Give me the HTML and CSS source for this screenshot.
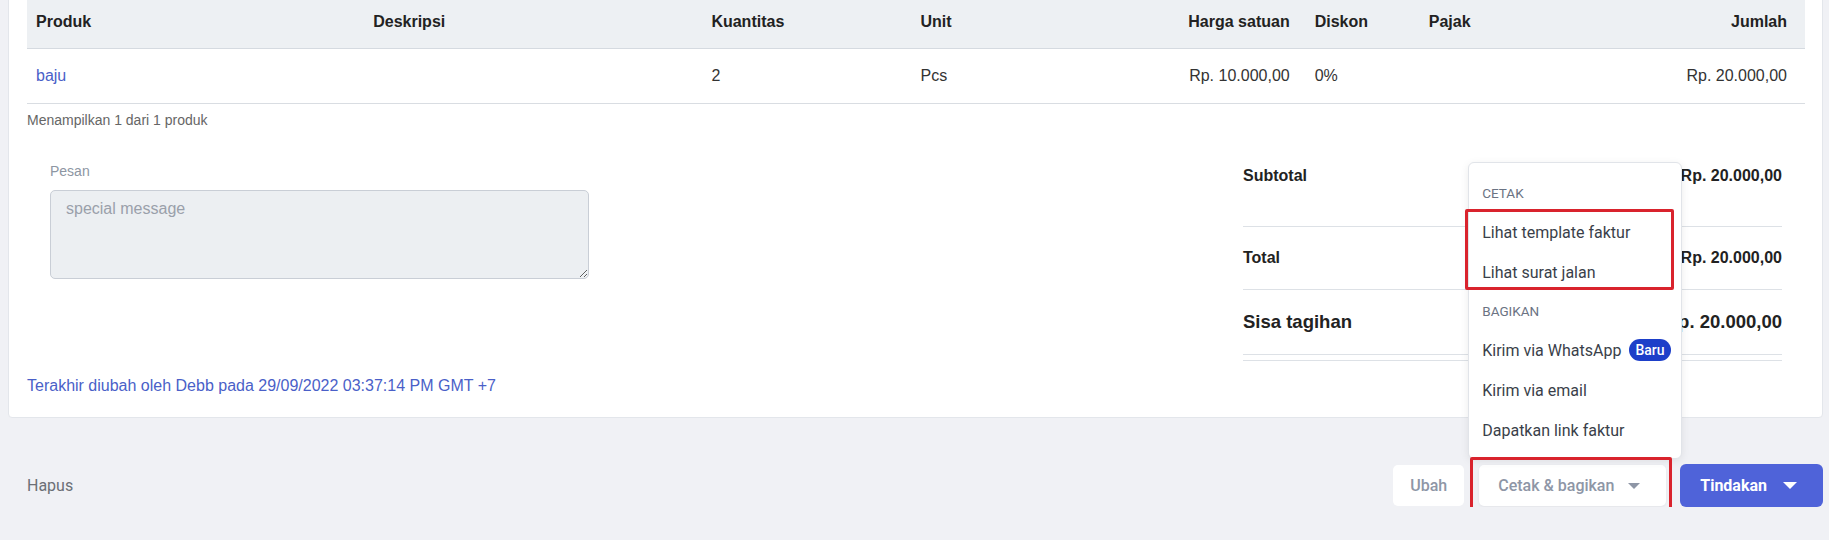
FILE: index.html
```html
<!DOCTYPE html>
<html>

	<head>
		<meta charset="UTF-8">
		<title>Faktur</title>
		<link rel="stylesheet" href="styles.css">
	</head>

	<body>
		<div class="page">
			<div class="card">
				<table class="items">
					<colgroup>
						<col class="c-produk">
						<col class="c-desk">
						<col class="c-qty">
						<col class="c-unit">
						<col class="c-harga">
						<col class="c-diskon">
						<col class="c-pajak">
						<col class="c-jumlah">
					</colgroup>
					<tr>
						<th>Produk</th>
						<th>Deskripsi</th>
						<th>Kuantitas</th>
						<th>Unit</th>
						<th class="right">Harga satuan</th>
						<th>Diskon</th>
						<th>Pajak</th>
						<th class="right">Jumlah</th>
					</tr>
					<tr>
						<td><a class="link">baju</a></td>
						<td></td>
						<td>2</td>
						<td>Pcs</td>
						<td class="right">Rp. 10.000,00</td>
						<td>0%</td>
						<td></td>
						<td class="right">Rp. 20.000,00</td>
					</tr>
				</table>
				<p class="count">Menampilkan 1 dari 1 produk</p>

				<div class="bottom">
					<div class="note">
						<label>Pesan</label>
						<textarea placeholder="special message"></textarea>
					</div>
					<div class="summary">
						<div class="sum-row first">
							<span>Subtotal</span>
							<span>Rp. 20.000,00</span>
						</div>
						<div class="sum-row">
							<span>Total</span>
							<span>Rp. 20.000,00</span>
						</div>
						<div class="sum-row big">
							<span>Sisa tagihan</span>
							<span>Rp. 20.000,00</span>
						</div>
						<div class="sum-end"></div>
					</div>
				</div>

				<p class="edited">Terakhir diubah oleh Debb pada 29/09/2022 03:37:14 PM GMT +7</p>
			</div>

			<div class="actions">
				<span class="delete">Hapus</span>
				<div class="btns">
					<button class="btn btn-light btn-edit">Ubah</button>
					<div class="share">
						<div class="menu">
							<div class="menu-head">Cetak</div>
							<div class="menu-item">Lihat template faktur</div>
							<div class="menu-item">Lihat surat jalan</div>
							<div class="menu-head">Bagikan</div>
							<div class="menu-item">Kirim via WhatsApp <span class="badge">Baru</span></div>
							<div class="menu-item">Kirim via email</div>
							<div class="menu-item">Dapatkan link faktur</div>
							<div class="mark mark-menu"></div>
						</div>
						<button class="btn btn-light btn-share">Cetak &amp; bagikan <i class="caret"></i></button>
						<div class="mark mark-btn"></div>
					</div>
					<button class="btn btn-primary">Tindakan <i class="caret caret-white"></i></button>
				</div>
			</div>
		</div>
	</body>

</html>
```

FILE: styles.css
```css
body {
	margin: 0;
	background-color: #f0f1f5;
	font-family: "Liberation Sans", Arial, sans-serif;
	color: #333;
	overflow: hidden;
}

.page {
	margin-top: -19px;
	padding: 0 6px 0 8px;
}

.card {
	background-color: white;
	border: 1px solid #e3e6eb;
	border-radius: 4px;
	padding: 18px 17px 22px 18px;
}

/* tabel produk */
.items {
	width: 100%;
	table-layout: fixed;
	border-collapse: separate;
	border-spacing: 0;
	font-size: 16px;
}

.c-produk { width: 337px; }
.c-desk { width: 338px; }
.c-qty { width: 209px; }
.c-unit { width: 200px; }
.c-harga { width: 194px; }
.c-diskon { width: 114px; }
.c-pajak { width: 202px; }
.c-jumlah { width: 183px; }

.items th {
	height: 44px;
	padding: 0 9px 4px;
	background-color: #edf0f3;
	border-bottom: 1px solid #d5dae0;
	text-align: left;
	color: #222;
	font-weight: bold;
}

.items td {
	height: 54px;
	padding: 0 9px;
	border-bottom: 1px solid #d9dde2;
	color: #333;
}

.items .right {
	text-align: right;
}

.items th:nth-child(5),
.items td:nth-child(5) {
	padding-right: 16px;
}

.items th:last-child,
.items td:last-child {
	padding-right: 18px;
}

.link {
	color: #4a5fc8;
	cursor: pointer;
}

.count {
	margin: 7px 0 0;
	font-size: 14px;
	line-height: 18px;
	color: #666;
}

/* pesan dan ringkasan */
.bottom {
	display: flex;
	justify-content: space-between;
	margin-top: 33px;
	padding: 0 23px;
}

.note {
	width: 539px;
}

.note label {
	display: block;
	font-size: 14px;
	line-height: 18px;
	color: #8d96a3;
}

.note textarea {
	display: block;
	box-sizing: border-box;
	width: 100%;
	height: 89px;
	margin-top: 10px;
	padding: 9px 15px;
	background-color: #eceff2;
	border: 1px solid #c9ced6;
	border-radius: 5px;
	font-family: "Liberation Sans", Arial, sans-serif;
	font-size: 16px;
	color: #333;
}

.note textarea::placeholder {
	color: #9aa0aa;
}

.summary {
	width: 539px;
}

.sum-row {
	box-sizing: border-box;
	display: flex;
	justify-content: space-between;
	align-items: center;
	height: 63px;
	border-bottom: 1px solid #dde1e6;
	font-size: 16px;
	line-height: 18px;
	font-weight: bold;
	color: #222;
}

.sum-row.first {
	align-items: flex-start;
	height: 65px;
	padding-top: 5px;
}

.sum-row.big {
	height: 65px;
	font-size: 18.5px;
}

.sum-end {
	margin-top: 5px;
	border-top: 1px solid #dde1e6;
}

.edited {
	margin: 16px 0 0;
	font-size: 16px;
	line-height: 18px;
	color: #4a5fc8;
}

/* tombol bawah */
.actions {
	display: flex;
	justify-content: space-between;
	align-items: center;
	margin-top: 46px;
	padding-left: 19px;
}

.delete {
	font-family: Roboto, sans-serif;
	font-size: 16px;
	color: #6b6f76;
}

.btns {
	display: flex;
	align-items: center;
	gap: 15px;
}

.share {
	position: relative;
	margin-right: -1px;
}

.btn {
	display: flex;
	align-items: center;
	border: none;
	border-radius: 5px;
	font-family: Roboto, sans-serif;
	font-size: 16px;
	font-weight: 500;
	cursor: pointer;
}

.btn-light {
	height: 41px;
	padding: 0 18px 0 19px;
	background-color: white;
	color: #8e96a6;
}

.btn-edit {
	padding: 0 17px;
}

.btn-share {
	width: 187px;
	padding: 0 26px 0 19px;
	justify-content: space-between;
	box-shadow: 0 1px 3px rgba(0, 0, 0, 0.06);
}

.btn-primary {
	height: 43px;
	padding: 0 26px 0 20px;
	gap: 16px;
	background-color: #4f63d9;
	color: white;
	font-weight: bold;
	border-radius: 6px;
}

.caret {
	width: 0;
	height: 0;
	border-left: 6px solid transparent;
	border-right: 6px solid transparent;
	border-top: 6px solid #8e96a6;
}

.caret-white {
	border-left-width: 7px;
	border-right-width: 7px;
	border-top: 7px solid white;
}

/* menu cetak & bagikan */
.menu {
	position: absolute;
	left: -11px;
	bottom: calc(100% + 6px);
	box-sizing: border-box;
	width: 214px;
	padding: 11px 0 8px;
	background-color: white;
	border: 1px solid #e1e4e9;
	border-radius: 6px;
	box-shadow: 0 2px 8px rgba(0, 0, 0, 0.08);
	font-family: Roboto, sans-serif;
}

.menu-head {
	height: 38px;
	line-height: 38px;
	padding: 0 13px;
	font-size: 13.5px;
	text-transform: uppercase;
	color: #6b7383;
}

.menu-item {
	display: flex;
	align-items: center;
	gap: 8px;
	height: 40px;
	padding: 0 0 0 13px;
	font-size: 16px;
	white-space: nowrap;
	color: #3a3f4a;
	cursor: pointer;
}

.badge {
	padding: 0 6px;
	height: 22px;
	line-height: 22px;
	border-radius: 11px;
	background-color: #1d3fc9;
	color: white;
	font-size: 14px;
	font-weight: 500;
}

/* tanda merah */
.mark {
	position: absolute;
	box-sizing: border-box;
	border: 3px solid #d9232d;
	border-radius: 2px;
	pointer-events: none;
}

.mark-menu {
	left: -4px;
	top: 46px;
	width: 209px;
	height: 81px;
}

.mark-btn {
	left: -9px;
	top: -8px;
	width: 202px;
	height: 61px;
}
```
